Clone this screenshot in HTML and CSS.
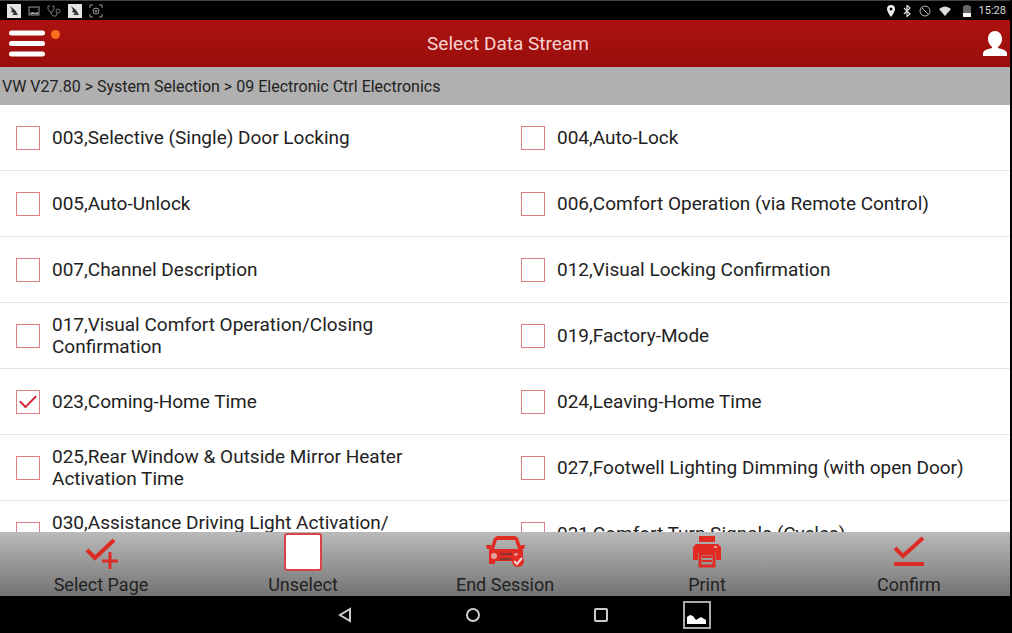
FILE: index.html
```html
<!DOCTYPE html>
<html lang="en">
<head>
    <meta charset="UTF-8">
    <meta name="viewport" content="width=device-width, initial-scale=1.0">
    <title>Select Data Stream</title>
    <link rel="stylesheet" href="styles.css">
</head>
<body>
    <div class="status-bar">
        <div class="status-group status-left">
            <svg width="14" height="14" viewBox="0 0 14 14"><rect width="14" height="14" fill="#e4e4e4"/><path d="M3 2l5 4 3 5H5l2-2-3-1 1-2z" fill="#333"/></svg>
            <svg width="12" height="12" viewBox="0 0 12 12"><rect x="1" y="2" width="10" height="8" fill="none" stroke="#999"/><path d="M2 9V8l3-1 2 1 3-1v2z" fill="#aaa"/></svg>
            <svg width="14" height="12" viewBox="0 0 14 12" fill="none" stroke="#777"><path d="M3 1H1v3l2 3h2l2-3V1H5M4 7v2l2 2h3l1-3"/><circle cx="11" cy="6" r="2"/></svg>
            <svg width="14" height="14" viewBox="0 0 14 14"><rect width="14" height="14" fill="#e4e4e4"/><path d="M3 2l5 4 3 5H5l2-2-3-1 1-2z" fill="#333"/></svg>
            <svg width="14" height="14" viewBox="0 0 14 14" fill="none" stroke="#999"><path d="M1 4V1h3M10 1h3v3M13 10v3h-3M4 13H1v-3"/><circle cx="7" cy="7" r="3"/><circle cx="7" cy="7" r="1"/></svg>
        </div>
        <div class="status-group status-right">
            <svg width="8" height="12" viewBox="0 0 8 12"><path d="M4 0a4 4 0 0 0-4 4c0 3 4 8 4 8s4-5 4-8a4 4 0 0 0-4-4zm0 2.500a1.500 1.500 0 1 1 0 3 1.500 1.500 0 0 1 0-3z" fill="#eee"/></svg>
            <svg width="8" height="12" viewBox="0 0 8 12" fill="none" stroke="#ddd" stroke-width="1.200"><path d="M1 3l6 6-3 2.500v-11L7 3 1 9"/></svg>
            <svg width="12" height="12" viewBox="0 0 12 12" fill="none" stroke="#bbb"><circle cx="6" cy="6" r="5"/><path d="M2.500 2.500l7 7"/></svg>
            <svg class="wifi" width="12" height="10" viewBox="0 0 12 10"><path d="M0 3q6-5 12 0L6 10z" fill="#ddd"/></svg>
            <svg width="8" height="12" viewBox="0 0 8 12"><path d="M0 1h2V0h4v1h2v11H0z" fill="#666"/><path d="M0 8h8v4H0z" fill="#fff"/></svg>
            <span class="clock">15:28</span>
        </div>
    </div>

    <header class="header">
        <button class="menu-btn" aria-label="Menu">
            <svg width="36" height="27" viewBox="0 0 36 27" fill="none" stroke="#fff" stroke-width="5" stroke-linecap="round"><path d="M2.500 3h31M2.500 13.500h31M2.500 24h31"/></svg>
            <span class="menu-dot"></span>
        </button>
        <h1>Select Data Stream</h1>
        <button class="user-btn" aria-label="User">
            <svg width="24" height="26" viewBox="0 0 24 26"><path d="M12 0C8 0 5 3 5 8c0 4 2 6 4 8v1c-4 1-8 2-9 5v3h24v-3c-1-3-5-4-9-5v-1c2-2 4-4 4-8 0-5-3-8-7-8z" fill="#fff"/></svg>
        </button>
    </header>

    <div class="breadcrumb">VW V27.80 &gt; System Selection &gt; 09 Electronic Ctrl Electronics</div>

    <main class="stream-list">
        <label class="stream-item"><input type="checkbox"><span>003,Selective (Single) Door Locking</span></label>
        <label class="stream-item"><input type="checkbox"><span>004,Auto-Lock</span></label>
        <label class="stream-item"><input type="checkbox"><span>005,Auto-Unlock</span></label>
        <label class="stream-item"><input type="checkbox"><span>006,Comfort Operation (via Remote Control)</span></label>
        <label class="stream-item"><input type="checkbox"><span>007,Channel Description</span></label>
        <label class="stream-item"><input type="checkbox"><span>012,Visual Locking Confirmation</span></label>
        <label class="stream-item"><input type="checkbox"><span>017,Visual Comfort Operation/Closing Confirmation</span></label>
        <label class="stream-item"><input type="checkbox"><span>019,Factory-Mode</span></label>
        <label class="stream-item"><input type="checkbox" checked><span>023,Coming-Home Time</span></label>
        <label class="stream-item"><input type="checkbox"><span>024,Leaving-Home Time</span></label>
        <label class="stream-item"><input type="checkbox"><span>025,Rear Window &amp; Outside Mirror Heater Activation Time</span></label>
        <label class="stream-item"><input type="checkbox"><span>027,Footwell Lighting Dimming (with open Door)</span></label>
        <label class="stream-item"><input type="checkbox"><span>030,Assistance Driving Light Activation/<wbr>Deactivation</span></label>
        <label class="stream-item"><input type="checkbox"><span>031,Comfort Turn Signals (Cycles)</span></label>
    </main>

    <div class="toolbar">
        <button class="tool-btn">
            <svg width="36" height="36" viewBox="0 0 36 36" fill="none" stroke="#dc2c24" stroke-width="4"><path d="M4 17l8 8L31 7"/><path d="M27 19v17M19 28h16" stroke-width="3"/></svg>
            <span>Select Page</span>
        </button>
        <button class="tool-btn">
            <svg width="38" height="38" viewBox="0 0 38 38"><rect x="1" y="1" width="36" height="36" rx="2" fill="#fff" stroke="#d9434a" stroke-width="2"/></svg>
            <span>Unselect</span>
        </button>
        <button class="tool-btn">
            <svg width="40" height="36" viewBox="0 0 40 36">
                <path d="M9 5l3-2h18l3 2 3 9 2 3v14h-6v-3H10v3H4V17l2-3zM12 7l-3 9h24l-3-9z" fill="#e02b23" fill-rule="evenodd"/>
                <path d="M1 12h5v4H2zM36 12h4l-1 4h-4z" fill="#e02b23"/>
                <circle cx="9" cy="23" r="3" fill="#e5a29d"/><circle cx="31" cy="22" r="2" fill="#e5a29d"/>
                <path d="M15 21h12M15 26h11" stroke="#8d3430" stroke-width="2"/>
                <circle cx="33" cy="28" r="6" fill="#e02b23"/><path d="M29 28l3 3 5-6" fill="none" stroke="#f5d9d7" stroke-width="2"/>
            </svg>
            <span>End Session</span>
        </button>
        <button class="tool-btn">
            <svg width="32" height="36" viewBox="0 0 32 36">
                <path d="M8 3h16v6H8zM5 11h22l3 3v13h-5v-7H7v7H2V14z" fill="#e02b23"/>
                <path d="M9 21h14v12H9z" fill="none" stroke="#e02b23" stroke-width="3"/><path d="M11 24h10M11 28h10" stroke="#e02b23" stroke-width="2"/>
                <path d="M23 14h3" stroke="#e5a29d" stroke-width="2"/>
            </svg>
            <span>Print</span>
        </button>
        <button class="tool-btn">
            <svg width="34" height="36" viewBox="0 0 34 36" fill="none" stroke="#dc2c24" stroke-width="4"><path d="M3 15l8 8L31 5M2 31h30"/></svg>
            <span>Confirm</span>
        </button>
    </div>

    <nav class="nav-bar">
        <button class="nav-btn" aria-label="Back">
            <svg width="16" height="16" viewBox="0 0 16 16" fill="none" stroke="#ccc" stroke-width="2"><path d="M13 2v12L3 8z"/></svg>
        </button>
        <button class="nav-btn" aria-label="Home">
            <svg width="16" height="16" viewBox="0 0 16 16" fill="none" stroke="#ccc" stroke-width="2"><circle cx="8" cy="8" r="6"/></svg>
        </button>
        <button class="nav-btn" aria-label="Recent apps">
            <svg width="16" height="16" viewBox="0 0 16 16" fill="none" stroke="#ccc" stroke-width="2"><rect x="2" y="2" width="12" height="12" rx="1"/></svg>
        </button>
        <button class="nav-btn nav-shot" aria-label="Screenshot">
            <svg width="28" height="28" viewBox="0 0 28 28"><rect x="1" y="1" width="26" height="26" fill="#000" stroke="#aaa" stroke-width="2"/><path d="M4 23v-7l3-2 3 1 3 4 5-3 5 3v4z" fill="#fff"/></svg>
        </button>
    </nav>
</body>
</html>
```

FILE: styles.css
```css
* {
    margin: 0;
    padding: 0;
    box-sizing: border-box;
    font-family: Roboto, sans-serif;
}

body {
    height: 100vh;
    display: flex;
    flex-direction: column;
    padding-right: 2px;
    background: #000;
    color: #222;
    overflow: hidden;
}

svg {
    display: block;
}

button {
    border: none;
    background: none;
    color: inherit;
    cursor: pointer;
}

.status-bar {
    height: 20px;
    flex-shrink: 0;
    display: flex;
    justify-content: space-between;
    align-items: center;
    padding: 0 4px 0 7px;
    border-top: 1px solid #444;
}

.status-group {
    display: flex;
    align-items: center;
}

.status-left {
    gap: 7px;
}

.status-right {
    gap: 8px;
}

.wifi {
    margin-right: 4px;
}

.clock {
    color: #ddd;
    font-size: 11px;
    line-height: 16px;
}

.header {
    height: 47px;
    flex-shrink: 0;
    display: grid;
    grid-template-columns: 1fr auto 1fr;
    align-items: center;
    padding: 0 3px 0 9px;
    background: linear-gradient(#ad120f, #980e0c);
}

.header h1 {
    color: #f9d3d0;
    font-size: 19px;
    font-weight: 400;
    line-height: 24px;
}

.menu-btn {
    display: flex;
    align-items: flex-start;
    gap: 6px;
    justify-self: start;
}

.menu-dot {
    width: 9px;
    height: 9px;
    border-radius: 50%;
    background: #f9701c;
}

.user-btn {
    justify-self: end;
}

.breadcrumb {
    height: 38px;
    flex-shrink: 0;
    padding: 0 2px;
    background: #b0b0b0;
    font-size: 16px;
    line-height: 40px;
}

.stream-list {
    flex: 1;
    min-height: 0;
    display: grid;
    grid-template-columns: 1fr 1fr;
    grid-auto-rows: minmax(66px, auto);
    align-content: start;
    background: #fff;
    overflow-y: auto;
    scrollbar-width: none;
}

.stream-item {
    display: flex;
    align-items: center;
    gap: 12px;
    padding: 0 36px 0 16px;
    border-bottom: 1px solid #e4e4e4;
    font-size: 19px;
    line-height: 22px;
    cursor: pointer;
}

.stream-item input {
    appearance: none;
    width: 24px;
    height: 24px;
    flex-shrink: 0;
    display: grid;
    place-items: center;
    border: 1px solid #dc7f84;
    background: #fff;
}

.stream-item input:checked::before {
    content: "";
    width: 14px;
    height: 7px;
    margin-bottom: 4px;
    border-left: 2px solid #d0283a;
    border-bottom: 2px solid #d0283a;
    transform: rotate(-45deg);
}

.toolbar {
    height: 64px;
    flex-shrink: 0;
    display: grid;
    grid-template-columns: repeat(5, 1fr);
    background: linear-gradient(#bababa, #737373);
}

.tool-btn {
    display: flex;
    flex-direction: column;
    align-items: center;
    justify-content: space-between;
    padding-top: 1px;
    font-size: 18px;
    line-height: 22px;
}

.nav-bar {
    height: 37px;
    flex-shrink: 0;
    display: flex;
    justify-content: center;
}

.nav-btn {
    width: 128px;
    display: grid;
    place-items: center;
}

.nav-shot {
    width: 64px;
}
```
